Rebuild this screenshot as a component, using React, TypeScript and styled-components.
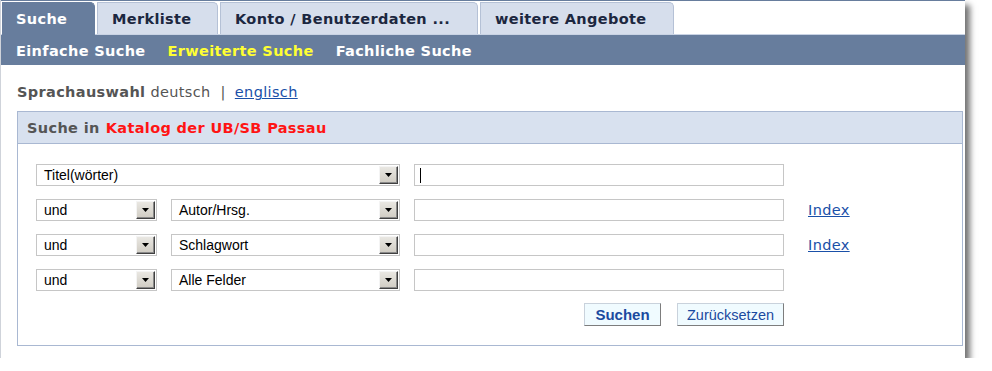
import React from "react";
import styled, { createGlobalStyle } from "styled-components";

const GlobalStyle = createGlobalStyle`
  html, body { margin: 0; padding: 0; background: #ffffff; }
  body { font-family: "DejaVu Sans", Verdana, sans-serif; letter-spacing: 0.35px; }
`;

const SLATE = "#677d9d";

const Frame = styled.div`
  width: 964px;
  height: 358px;
  background: #ffffff;
  border-left: 1px solid #cfd3da;
  box-shadow: 5px 5px 6px rgba(0, 0, 0, 0.55);
  display: flex;
  flex-direction: column;
  overflow: hidden;
`;

const TabBar = styled.div`
  display: flex;
  gap: 2px;
  height: 35px;
  box-sizing: border-box;
  border-top: 1px solid ${SLATE};
  border-bottom: 1px solid #c9d3e4;
  padding: 1px 0 0 1px;
`;

const Tab = styled.div<{ $active?: boolean; $w: number }>`
  width: ${(p) => p.$w}px;
  box-sizing: border-box;
  display: flex;
  align-items: center;
  padding-left: ${(p) => (p.$active ? "13px" : "14px")};
  font-size: 14.5px;
  font-weight: bold;
  color: ${(p) => (p.$active ? "#ffffff" : "#1c2740")};
  background: ${(p) => (p.$active ? SLATE : "#d6deec")};
  border: 1px solid ${(p) => (p.$active ? SLATE : "#b5c1d6")};
  border-bottom: none;
  border-top-right-radius: 5px;
  margin-bottom: ${(p) => (p.$active ? "-1px" : "0")};
  position: relative;
`;

const SubNav = styled.div`
  height: 30px;
  background: ${SLATE};
  display: flex;
  align-items: center;
  gap: 22px;
  padding: 1px 0 0 15px;
  box-sizing: border-box;
`;

const SubItem = styled.span<{ $current?: boolean }>`
  font-size: 14.5px;
  font-weight: bold;
  color: ${(p) => (p.$current ? "#ffff33" : "#ffffff")};
`;

const Content = styled.div`
  padding: 18px 0 0 16px;
`;

const LangLine = styled.div`
  height: 18px;
  line-height: 18px;
  font-size: 14.5px;
  color: #555555;
  margin-bottom: 10px;
`;

const Strong = styled.b`
  font-weight: bold;
`;

const Sep = styled.span`
  margin: 0 9px 0 10px;
`;

const Link = styled.a`
  color: #1a50a8;
  text-decoration: underline;
  font-size: 14.5px;
  cursor: pointer;
`;

const Panel = styled.div`
  width: 946px;
  box-sizing: border-box;
  display: flex;
  flex-direction: column;
`;

const PanelHeader = styled.div`
  height: 33px;
  box-sizing: border-box;
  background: #d8e1ef;
  border: 1px solid #a9b8d2;
  display: flex;
  align-items: center;
  padding-left: 9px;
  font-size: 14.5px;
  font-weight: bold;
  color: #555555;
`;

const Red = styled.span`
  color: #ff1414;
  margin-left: 6px;
`;

const PanelBody = styled.div`
  height: 202px;
  box-sizing: border-box;
  border: 1px solid #a9b8d2;
  border-top: none;
  padding: 20px 0 0 18px;
`;

const FormGrid = styled.div`
  display: grid;
  grid-template-columns: 121px 229px 370px auto;
  grid-auto-rows: 22px;
  column-gap: 14px;
  row-gap: 13px;
  align-items: center;
`;

const SelectBox = styled.div<{ $span?: number }>`
  grid-column: span ${(p) => p.$span ?? 1};
  height: 22px;
  box-sizing: border-box;
  border: 1px solid #c6c6c6;
  background: #ffffff;
  display: flex;
  align-items: center;
  padding: 1px;
  font-family: "Liberation Sans", Arial, sans-serif;
  font-size: 14px;
  letter-spacing: 0;
  color: #000000;
`;

const SelectText = styled.span`
  flex: 1;
  padding-left: 6px;
`;

const DropButton = styled.span`
  width: 19px;
  height: 18px;
  box-sizing: border-box;
  background: linear-gradient(#e9e7e2, #d0ccc3);
  border-top: 1px solid #f4f4f4;
  border-left: 1px solid #f4f4f4;
  border-right: 1px solid #404040;
  border-bottom: 1px solid #404040;
  box-shadow: inset -1px -1px 0 #8a8a8a;
  display: flex;
  align-items: center;
  justify-content: center;
`;

const TextField = styled.div`
  grid-column: 3;
  height: 22px;
  box-sizing: border-box;
  border: 1px solid #c6c6c6;
  background: #ffffff;
  display: flex;
  align-items: center;
  padding-left: 5px;
`;

const Caret = styled.span`
  width: 1px;
  height: 15px;
  background: #000000;
`;

const IndexLink = styled(Link)`
  grid-column: 4;
  margin-left: 10px;
`;

const ButtonRow = styled.div`
  grid-column: 3;
  display: flex;
  justify-content: flex-end;
  gap: 16px;
  margin-top: -1px;
`;

const Button = styled.button<{ $primary?: boolean }>`
  height: 23px;
  box-sizing: border-box;
  padding: 0;
  width: ${(p) => (p.$primary ? "77px" : "107px")};
  background: #f0fbff;
  border: 1px solid #c9d2dc;
  border-right-color: #7d7d7d;
  border-bottom-color: #7d7d7d;
  font-family: "Liberation Sans", Arial, sans-serif;
  font-size: ${(p) => (p.$primary ? "15px" : "14.5px")};
  letter-spacing: 0;
  font-weight: ${(p) => (p.$primary ? "bold" : "normal")};
  color: #1b4aa0;
  cursor: pointer;
`;

const Arrow = () => (
  <svg width="7" height="4" viewBox="0 0 7 4">
    <path d="M0 0H7L3.5 4Z" fill="#000" />
  </svg>
);

const Select = ({ label, span }: { label: string; span?: number }) => (
  <SelectBox $span={span}>
    <SelectText>{label}</SelectText>
    <DropButton>
      <Arrow />
    </DropButton>
  </SelectBox>
);

export default function App() {
  return (
    <>
      <GlobalStyle />
      <Frame>
        <TabBar>
          <Tab $active $w={93}>Suche</Tab>
          <Tab $w={121}>Merkliste</Tab>
          <Tab $w={258}>Konto / Benutzerdaten ...</Tab>
          <Tab $w={194}>weitere Angebote</Tab>
        </TabBar>
        <SubNav>
          <SubItem>Einfache Suche</SubItem>
          <SubItem $current>Erweiterte Suche</SubItem>
          <SubItem>Fachliche Suche</SubItem>
        </SubNav>
        <Content>
          <LangLine>
            <Strong>Sprachauswahl</Strong> deutsch<Sep>|</Sep>
            <Link>englisch</Link>
          </LangLine>
          <Panel>
            <PanelHeader>
              Suche in<Red>Katalog der UB/SB Passau</Red>
            </PanelHeader>
            <PanelBody>
              <FormGrid>
                <Select label="Titel(wörter)" span={2} />
                <TextField>
                  <Caret />
                </TextField>
                <span />

                <Select label="und" />
                <Select label="Autor/Hrsg." />
                <TextField />
                <IndexLink>Index</IndexLink>

                <Select label="und" />
                <Select label="Schlagwort" />
                <TextField />
                <IndexLink>Index</IndexLink>

                <Select label="und" />
                <Select label="Alle Felder" />
                <TextField />
                <span />

                <ButtonRow>
                  <Button $primary>Suchen</Button>
                  <Button>Zurücksetzen</Button>
                </ButtonRow>
              </FormGrid>
            </PanelBody>
          </Panel>
        </Content>
      </Frame>
    </>
  );
}
